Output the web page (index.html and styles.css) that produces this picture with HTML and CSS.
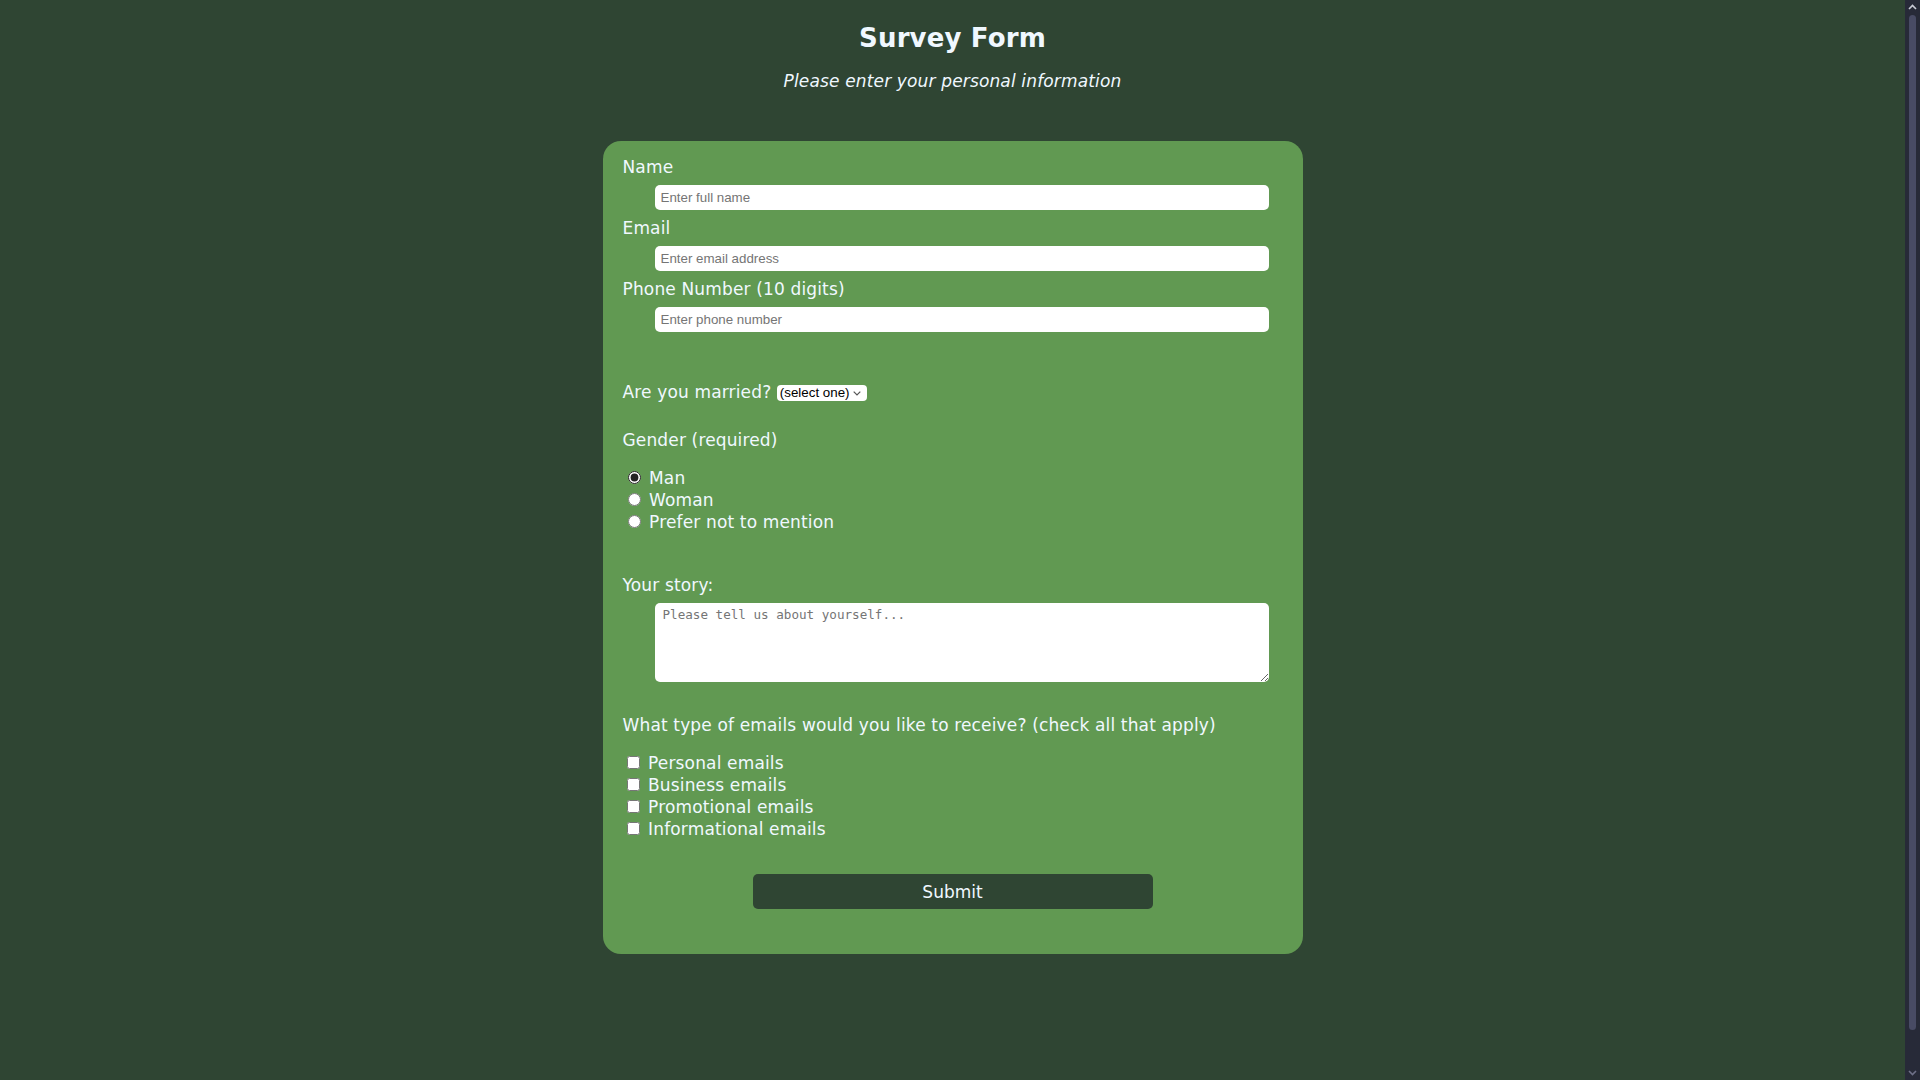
FILE: index.html
```html
<!DOCTYPE html>
<html lang="en">
<head>
<meta charset="utf-8">
<title>Survey Form</title>
<link rel="stylesheet" href="styles.css">
</head>
<body>
<header class="header">
  <h1 class="title">Survey Form</h1>
  <p class="subtitle">Please enter your personal information</p>
</header>
<form class="card">
  <label class="label" for="name">Name</label>
  <input class="field" id="name" type="text" placeholder="Enter full name">
  <label class="label" for="email">Email</label>
  <input class="field" id="email" type="email" placeholder="Enter email address">
  <label class="label" for="phone">Phone Number (10 digits)</label>
  <input class="field" id="phone" type="tel" placeholder="Enter phone number">

  <div class="label married">Are you married? <span class="select-wrap"><select class="select"><option>(select one)</option><option>Yes</option><option>No</option></select><svg class="chev" width="8" height="5" viewBox="0 0 8 5"><path d="M0.7 0.7 L4 4 L7.3 0.7" fill="none" stroke="#555" stroke-width="1.2"/></svg></span></div>

  <div class="label gender">Gender (required)</div>
  <div class="group">
    <label class="opt"><input class="radio" type="radio" name="g" checked> Man</label>
    <label class="opt"><input class="radio" type="radio" name="g"> Woman</label>
    <label class="opt"><input class="radio" type="radio" name="g"> Prefer not to mention</label>
  </div>

  <label class="label story" for="story">Your story:</label>
  <textarea class="area" id="story" placeholder="Please tell us about yourself..."></textarea>

  <div class="label types">What type of emails would you like to receive? (check all that apply)</div>
  <div class="group">
    <label class="opt"><input class="check" type="checkbox"> Personal emails</label>
    <label class="opt"><input class="check" type="checkbox"> Business emails</label>
    <label class="opt"><input class="check" type="checkbox"> Promotional emails</label>
    <label class="opt"><input class="check" type="checkbox"> Informational emails</label>
  </div>

  <button class="submit" type="button">Submit</button>
</form>
<div class="scrollbar" aria-hidden="true">
  <svg class="sb-arrow" width="15" height="15" viewBox="0 0 15 15"><path d="M4 9 L7.5 5.5 L11 9" fill="none" stroke="#c9cbd6" stroke-width="1.6"/></svg>
  <div class="sb-track"><div class="sb-thumb"></div></div>
  <svg class="sb-arrow" width="15" height="15" viewBox="0 0 15 15"><path d="M4 6 L7.5 9.5 L11 6" fill="none" stroke="#6e7088" stroke-width="1.6"/></svg>
</div>
</body>
</html>
```
FILE: styles.css
```css
html {
  scrollbar-color: #484b64 #272a38;
}
body {
  margin: 0;
  padding-right: 15px;
  background: #2f4533;
  color: #f0f8ff;
  font-family: "DejaVu Sans", sans-serif;
  font-size: 17px;
  letter-spacing: 0.15px;
}
.header {
  text-align: center;
}
.title {
  margin: 23px 0 0;
  font-size: 26px;
  line-height: 30px;
  font-weight: bold;
}
.subtitle {
  margin: 18px 0 0;
  font-style: italic;
  line-height: 20px;
}
.card {
  width: 700px;
  box-sizing: border-box;
  margin: 50px auto 100px;
  padding: 16px 20px 45px;
  background: #619952;
  border-radius: 18px;
  display: flex;
  flex-direction: column;
}
.label {
  line-height: 20px;
}
.field {
  display: block;
  box-sizing: border-box;
  width: 614px;
  height: 25px;
  margin: 8px 0 8px 32px;
  padding: 0 6px;
  border: none;
  border-radius: 5px;
  background: #fff;
  font-family: "Liberation Sans", Arial, sans-serif;
  font-size: 13.33px;
  letter-spacing: normal;
  outline: none;
}
.married {
  margin-top: 42px;
}
.select-wrap {
  position: relative;
  display: inline-block;
  vertical-align: middle;
  height: 16px;
  line-height: 16px;
}
.select {
  display: block;
  -webkit-appearance: none;
  appearance: none;
  box-sizing: border-box;
  width: 90px;
  height: 16px;
  padding: 0 0 0 3px;
  border: none;
  border-radius: 4px;
  background: #fff;
  color: #000;
  font-family: "Liberation Sans", Arial, sans-serif;
  font-size: 13.33px;
  letter-spacing: normal;
  line-height: 16px;
}
.chev {
  position: absolute;
  right: 6px;
  top: 6px;
  pointer-events: none;
}
.gender {
  margin-top: 28px;
}
.group {
  margin-top: 17px;
  display: flex;
  flex-direction: column;
}
.opt {
  line-height: 22px;
}
.radio {
  margin: 3px 3px 0 5px;
  accent-color: #222;
}
.check {
  margin: 3px 3px 0 4px;
}
.story {
  margin-top: 42px;
}
.area {
  display: block;
  box-sizing: border-box;
  width: 614px;
  height: 79px;
  margin: 8px 0 0 32px;
  padding: 4px 8px;
  border: none;
  border-radius: 5px;
  background: #fff;
  font-family: "DejaVu Sans Mono", monospace;
  font-size: 12.6px;
  letter-spacing: normal;
  outline: none;
}
.types {
  margin-top: 33px;
}
.submit {
  align-self: center;
  width: 400px;
  height: 35px;
  margin-top: 34px;
  border: none;
  border-radius: 5px;
  background: #2f4533;
  color: #f0f8ff;
  font-family: "DejaVu Sans", sans-serif;
  font-size: 17px;
}
.scrollbar {
  position: fixed;
  top: 0;
  right: 0;
  width: 15px;
  height: 100vh;
  background: #272a38;
  display: flex;
  flex-direction: column;
}
.sb-arrow {
  display: block;
  flex: none;
}
.sb-track {
  flex: 1;
  display: flex;
  flex-direction: column;
  padding: 0 4px 35px;
}
.sb-thumb {
  flex: 1;
  background: #484b64;
  border-radius: 4px;
}
```
